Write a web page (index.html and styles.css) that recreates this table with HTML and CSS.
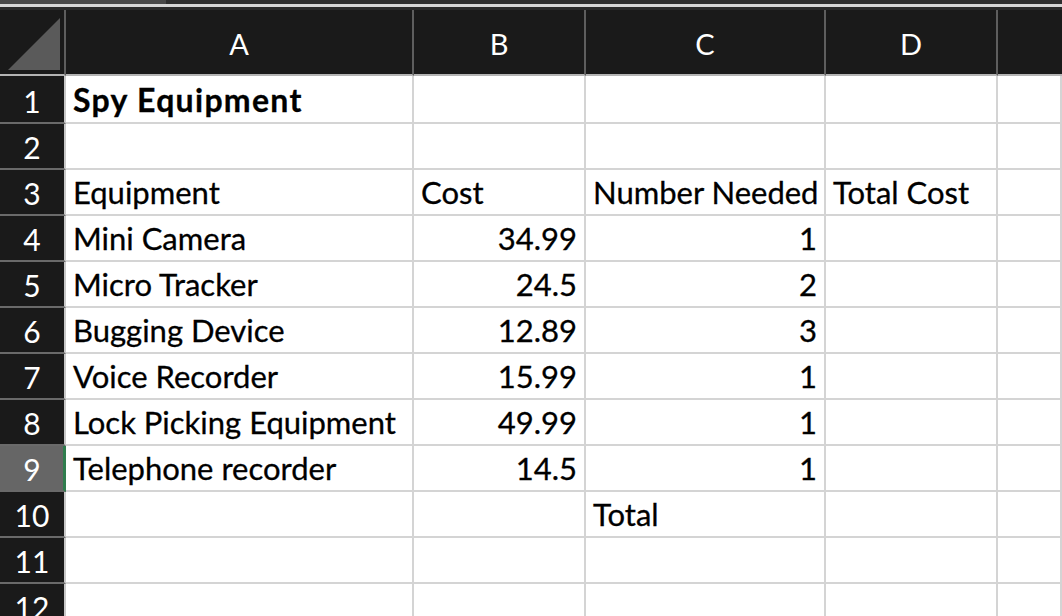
FILE: index.html
```html
<!DOCTYPE html>
<html>
<head>
<meta charset="utf-8">
<link rel="stylesheet" href="styles.css">
</head>
<body>
<div class="topbar">
  <div class="tb-top"><div class="tb-tab"></div></div>
  <div class="tb-light"></div>
  <div class="tb-dark"></div>
</div>
<div class="sheet">
  <div class="corner"><svg width="64" height="64" viewBox="0 0 64 64"><polygon points="8,60 60,8 60,60" fill="#5a5a5a"/></svg></div>
  <div class="colh">A</div><div class="colh">B</div><div class="colh">C</div><div class="colh">D</div><div class="colh last"></div>

  <div class="rowh">1</div><div class="c bold">Spy Equipment</div><div class="c"></div><div class="c"></div><div class="c"></div><div class="c"></div>
  <div class="rowh">2</div><div class="c"></div><div class="c"></div><div class="c"></div><div class="c"></div><div class="c"></div>
  <div class="rowh">3</div><div class="c">Equipment</div><div class="c">Cost</div><div class="c">Number Needed</div><div class="c">Total Cost</div><div class="c"></div>
  <div class="rowh">4</div><div class="c">Mini Camera</div><div class="c num">34.99</div><div class="c num">1</div><div class="c"></div><div class="c"></div>
  <div class="rowh">5</div><div class="c">Micro Tracker</div><div class="c num">24.5</div><div class="c num">2</div><div class="c"></div><div class="c"></div>
  <div class="rowh">6</div><div class="c">Bugging Device</div><div class="c num">12.89</div><div class="c num">3</div><div class="c"></div><div class="c"></div>
  <div class="rowh">7</div><div class="c">Voice Recorder</div><div class="c num">15.99</div><div class="c num">1</div><div class="c"></div><div class="c"></div>
  <div class="rowh">8</div><div class="c">Lock Picking Equipment</div><div class="c num">49.99</div><div class="c num">1</div><div class="c"></div><div class="c"></div>
  <div class="rowh sel">9</div><div class="c">Telephone recorder</div><div class="c num">14.5</div><div class="c num">1</div><div class="c"></div><div class="c"></div>
  <div class="rowh">10</div><div class="c"></div><div class="c"></div><div class="c">Total</div><div class="c"></div><div class="c"></div>
  <div class="rowh">11</div><div class="c"></div><div class="c"></div><div class="c"></div><div class="c"></div><div class="c"></div>
  <div class="rowh">12</div><div class="c"></div><div class="c"></div><div class="c"></div><div class="c"></div><div class="c"></div>
</div>
</body>
</html>
```
FILE: styles.css
```css
html, body {
  margin: 0;
  padding: 0;
  background: #ffffff;
  overflow: hidden;
  width: 1062px;
  height: 616px;
}
body {
  font-family: "Lato", "Open Sans", sans-serif;
  color: #000;
}
.topbar {
  height: 10px;
  display: flex;
  flex-direction: column;
}
.tb-top {
  height: 4px;
  background: #2e2e2e;
  display: flex;
}
.tb-tab {
  width: 166px;
  background: #484848;
}
.tb-light {
  height: 3px;
  background: #d6d6d6;
}
.tb-dark {
  height: 3px;
  background: #2a2a2a;
}
.sheet {
  display: grid;
  grid-template-columns: 66px 348px 172px 240px 172px 1fr;
  grid-template-rows: 66px 48px repeat(11, 46px);
}
.corner {
  background: #1a1a1a;
  border-right: 2px solid #5e5e5e;
  border-bottom: 2px solid #b4b4b4;
  box-sizing: border-box;
  overflow: hidden;
}
.corner svg { display: block; }
.colh {
  background: #1a1a1a;
  color: #ffffff;
  border-right: 2px solid #5e5e5e;
  border-bottom: 2px solid #b4b4b4;
  box-sizing: border-box;
  display: flex;
  align-items: center;
  justify-content: center;
  font-size: 29px;
  padding-top: 2px;
}
.colh.last { border-right: none; }
.rowh {
  background: #1a1a1a;
  color: #ffffff;
  border-right: 2px solid #c8c8c8;
  border-bottom: 2px solid #6a6a6a;
  box-sizing: border-box;
  display: flex;
  align-items: flex-end;
  justify-content: center;
  font-size: 30px;
  line-height: 1;
  padding-bottom: 6px;
}
.rowh.sel {
  background: #666666;
  border-right: 3px solid #2f7d4e;
  padding-left: 1px;
}
.c {
  border-right: 2px solid #d4d4d4;
  border-bottom: 2px solid #d4d4d4;
  box-sizing: border-box;
  display: flex;
  align-items: flex-end;
  padding: 0 7px 6px 7px;
  font-size: 31px;
  line-height: 1;
  white-space: nowrap;
  overflow: visible;
  -webkit-text-stroke: 0.3px #000;
}
.c.num { justify-content: flex-end; }
.c.bold { font-weight: bold; font-size: 32px; letter-spacing: 1.3px; }
```
